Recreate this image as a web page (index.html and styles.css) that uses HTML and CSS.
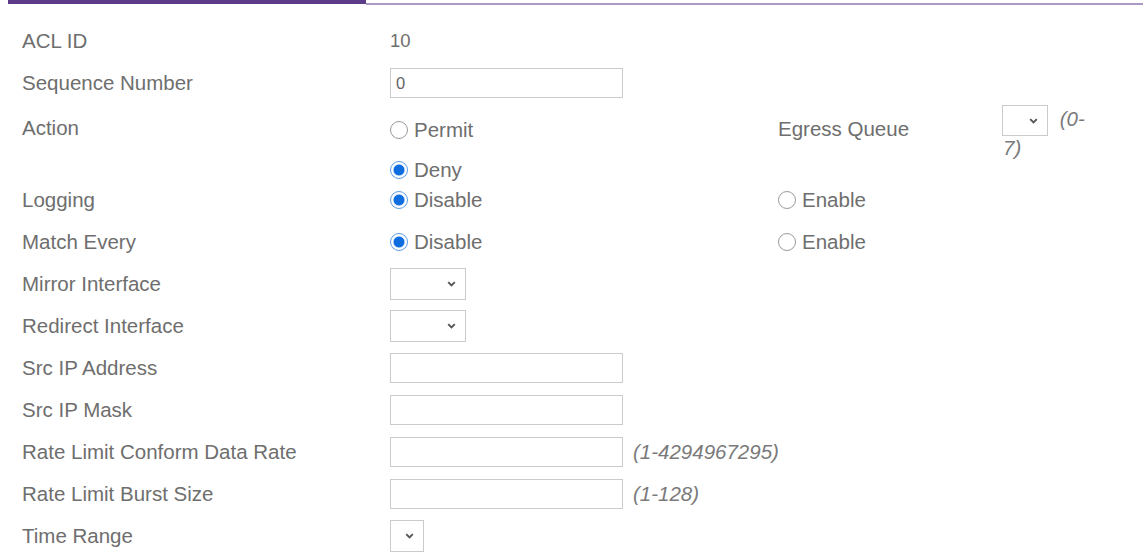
FILE: index.html
```html
<!DOCTYPE html>
<html>
<head>
<meta charset="utf-8">
<link rel="stylesheet" href="styles.css">
</head>
<body>
<div class="tabbar">
  <div class="tab-active"></div>
  <div class="tab-line"></div>
</div>
<form class="form">
  <div class="row">
    <div class="label">ACL ID</div>
    <div class="value small">10</div>
  </div>
  <div class="row">
    <div class="label">Sequence Number</div>
    <div class="value"><span class="input">0</span></div>
  </div>
  <div class="row row-action">
    <div class="label">Action</div>
    <div class="value stack">
      <div class="opt"><span class="radio"></span>Permit</div>
      <div class="opt opt-second"><span class="radio checked"></span>Deny</div>
    </div>
    <div class="label label-egress">Egress Queue</div>
    <div class="egress">
      <span class="select select-egress"><svg width="9" height="6" viewBox="0 0 9 6"><path d="M1.2 1.2 L4.5 4.5 L7.8 1.2" fill="none" stroke="#555" stroke-width="1.9"/></svg></span>
      <span class="hint">(0-</span><br><span class="hint">7)</span>
    </div>
  </div>
  <div class="row">
    <div class="label">Logging</div>
    <div class="value"><div class="opt"><span class="radio checked"></span>Disable</div></div>
    <div class="value"><div class="opt"><span class="radio"></span>Enable</div></div>
  </div>
  <div class="row">
    <div class="label">Match Every</div>
    <div class="value"><div class="opt"><span class="radio checked"></span>Disable</div></div>
    <div class="value"><div class="opt"><span class="radio"></span>Enable</div></div>
  </div>
  <div class="row">
    <div class="label">Mirror Interface</div>
    <div class="value"><span class="select select-md"><svg width="9" height="6" viewBox="0 0 9 6"><path d="M1.2 1.2 L4.5 4.5 L7.8 1.2" fill="none" stroke="#555" stroke-width="1.9"/></svg></span></div>
  </div>
  <div class="row">
    <div class="label">Redirect Interface</div>
    <div class="value"><span class="select select-md"><svg width="9" height="6" viewBox="0 0 9 6"><path d="M1.2 1.2 L4.5 4.5 L7.8 1.2" fill="none" stroke="#555" stroke-width="1.9"/></svg></span></div>
  </div>
  <div class="row">
    <div class="label">Src IP Address</div>
    <div class="value"><span class="input"></span></div>
  </div>
  <div class="row">
    <div class="label">Src IP Mask</div>
    <div class="value"><span class="input"></span></div>
  </div>
  <div class="row">
    <div class="label">Rate Limit Conform Data Rate</div>
    <div class="value wide"><span class="input"></span><span class="hint">(1-4294967295)</span></div>
  </div>
  <div class="row">
    <div class="label">Rate Limit Burst Size</div>
    <div class="value wide"><span class="input"></span><span class="hint">(1-128)</span></div>
  </div>
  <div class="row">
    <div class="label">Time Range</div>
    <div class="value"><span class="select select-sm"><svg width="9" height="6" viewBox="0 0 9 6"><path d="M1.2 1.2 L4.5 4.5 L7.8 1.2" fill="none" stroke="#555" stroke-width="1.9"/></svg></span></div>
  </div>
</form>
</body>
</html>
```
FILE: styles.css
```css
html, body {
  margin: 0;
  padding: 0;
  background: #ffffff;
}
body {
  font-family: "Liberation Sans", Arial, sans-serif;
  font-size: 20.5px;
  color: #6e6e6e;
}
.tabbar {
  display: flex;
  align-items: flex-start;
  padding-left: 8px;
  height: 5px;
}
.tab-active {
  width: 358px;
  height: 4px;
  background: #5c3b88;
}
.tab-line {
  flex: 1;
  margin-top: 3px;
  height: 1.5px;
  background: #ab99c4;
}
.form {
  padding: 15px 0 0 22px;
  margin: 0;
}
.row {
  display: grid;
  grid-template-columns: 368px 388px 224px 110px;
  height: 42px;
  align-items: center;
}
.label {
  line-height: 24px;
}
.value {
  display: flex;
  align-items: center;
}
.value.wide {
  grid-column: 2 / 4;
}
.small {
  font-size: 18.5px;
}
.input {
  box-sizing: border-box;
  display: inline-block;
  width: 233px;
  height: 30px;
  border: 1px solid #cbcbcb;
  font-size: 16.5px;
  line-height: 28px;
  padding-left: 5px;
  color: #666;
  background: #fff;
}
.hint {
  font-style: italic;
  color: #7a7a7a;
  margin-left: 10px;
}
.select {
  box-sizing: border-box;
  display: inline-flex;
  align-items: center;
  justify-content: flex-end;
  height: 32px;
  padding-right: 9px;
  border: 1px solid #cbcbcb;
  background: #fff;
}
.select-md { width: 76px; }
.select-sm { width: 34px; }
.select-egress { width: 46px; height: 31px; vertical-align: middle; }
.opt {
  display: flex;
  align-items: center;
  line-height: 24px;
  height: 24px;
}
.radio {
  box-sizing: border-box;
  width: 18px;
  height: 18px;
  border-radius: 50%;
  border: 1.5px solid #9a9a9a;
  background: #fff;
  margin-right: 6px;
  flex: none;
}
.radio.checked {
  border: 1.5px solid #5a9de8;
  background: radial-gradient(circle, #0f6edf 0, #0f6edf 5px, #dbe9fa 5.8px, #ffffff 6.6px);
}
.row-action {
  height: 75px;
  align-items: start;
}
.row-action .label {
  padding-top: 12px;
}
.row-action .label-egress {
  padding-top: 13px;
}
.stack {
  flex-direction: column;
  align-items: flex-start;
  padding-top: 14px;
}
.opt-second {
  margin-top: 16px;
}
.egress {
  padding-top: 1px;
  line-height: 24px;
}
.egress .hint {
  margin-left: 6px;
}
.egress br + .hint {
  margin-left: 1px;
}
```
